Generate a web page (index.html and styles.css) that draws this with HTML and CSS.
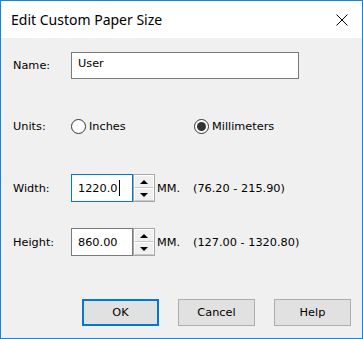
FILE: index.html
```html
<!DOCTYPE html>
<html lang="en">
<head>
  <meta charset="UTF-8" />
  <title>Edit Custom Paper Size</title>
  <link rel="stylesheet" href="styles.css">
</head>
<body>

  <div class="dialog">
    <div class="titlebar">
      <span class="title">Edit Custom Paper Size</span>
      <svg class="close" width="12" height="12" viewBox="0 0 12 12">
        <path d="M0.5 0.5 L11.5 11.5 M11.5 0.5 L0.5 11.5" stroke="#000" stroke-width="1" fill="none"/>
      </svg>
    </div>

    <div class="content">
      <div class="row row-name">
        <span class="label">Name:</span>
        <div class="textbox name-box">User</div>
      </div>

      <div class="row row-units">
        <span class="label">Units:</span>
        <label class="radio radio-inches"><span class="dot"></span>Inches</label>
        <label class="radio"><span class="dot checked"></span>Millimeters</label>
      </div>

      <div class="row row-width">
        <span class="label">Width:</span>
        <div class="textbox num-box focused">1220.0<span class="caret"></span></div>
        <div class="spinner">
          <div class="spin-btn"><span class="arrow-up"></span></div>
          <div class="spin-btn"><span class="arrow-down"></span></div>
        </div>
        <span class="unit">MM.</span>
        <span class="range">(76.20 - 215.90)</span>
      </div>

      <div class="row row-height">
        <span class="label">Height:</span>
        <div class="textbox num-box">860.00</div>
        <div class="spinner">
          <div class="spin-btn"><span class="arrow-up"></span></div>
          <div class="spin-btn"><span class="arrow-down"></span></div>
        </div>
        <span class="unit">MM.</span>
        <span class="range">(127.00 - 1320.80)</span>
      </div>

      <div class="buttons">
        <button class="btn btn-default">OK</button>
        <button class="btn">Cancel</button>
        <button class="btn">Help</button>
      </div>
    </div>
  </div>

</body>
</html>
```

FILE: styles.css
```css
html, body {
  margin: 0;
  padding: 0;
}

body {
  font-family: "DejaVu Sans", sans-serif;
  font-size: 11.3px;
  color: #000;
}

.dialog {
  width: 363px;
  height: 339px;
  box-sizing: border-box;
  border: 1px solid #1883d7;
  background: #f0f0f0;
}

.titlebar {
  height: 37px;
  background: #fff;
  display: flex;
  align-items: center;
  justify-content: space-between;
  padding: 0 14px 0 10px;
}

.title {
  font-family: "Noto Sans", sans-serif;
  font-size: 14px;
  color: #000;
  margin-top: -1px;
}

.close {
  display: block;
}

.content {
  padding: 14px 0 0 12px;
}

.row {
  display: flex;
  align-items: center;
  height: 27px;
}

.row-units {
  margin-top: 34px;
}

.row-width {
  margin-top: 34px;
  height: 28px;
}

.row-height {
  margin-top: 26px;
  height: 28px;
}

.label {
  width: 58px;
  flex: none;
}

.textbox {
  box-sizing: border-box;
  height: 100%;
  background: #fff;
  border: 1px solid #7a7a7a;
  padding: 0 6px;
  display: flex;
  align-items: center;
}

.name-box {
  width: 228px;
  align-items: flex-start;
  padding-top: 4px;
}

.num-box {
  width: 62px;
}

.focused {
  border-color: #0078d7;
}

.caret {
  display: inline-block;
  width: 1px;
  height: 16px;
  background: #000;
  margin-left: 1px;
}

.radio {
  display: flex;
  align-items: center;
}

.radio-inches {
  width: 123px;
}

.dot {
  width: 13px;
  height: 13px;
  border: 1px solid #333;
  border-radius: 50%;
  background: #fff;
  margin-right: 3px;
  position: relative;
}

.dot.checked::after {
  content: "";
  position: absolute;
  left: 2px;
  top: 2px;
  width: 9px;
  height: 9px;
  border-radius: 50%;
  background: #333;
}

.spinner {
  box-sizing: border-box;
  width: 22px;
  height: 100%;
  border: 1px solid #a6a6a6;
  display: flex;
  flex-direction: column;
}

.spin-btn {
  flex: 1;
  border: 1px solid #fff;
  border-bottom-color: #c8c8c8;
  background: #f0f0f0;
  display: flex;
  align-items: center;
  justify-content: center;
}

.arrow-up {
  width: 0;
  height: 0;
  border-left: 4px solid transparent;
  border-right: 4px solid transparent;
  border-bottom: 4px solid #000;
}

.arrow-down {
  width: 0;
  height: 0;
  border-left: 4px solid transparent;
  border-right: 4px solid transparent;
  border-top: 4px solid #000;
}

.unit {
  margin-left: 2px;
  width: 36px;
}

.buttons {
  display: flex;
  justify-content: flex-end;
  gap: 19px;
  margin-top: 43px;
  padding-right: 11px;
}

.btn {
  font-family: "DejaVu Sans", sans-serif;
  font-size: 11.3px;
  color: #000;
  width: 77px;
  height: 27px;
  background: #e1e1e1;
  border: 1px solid #adadad;
  padding: 0;
}

.btn-default {
  border: 2px solid #0078d7;
}
```
